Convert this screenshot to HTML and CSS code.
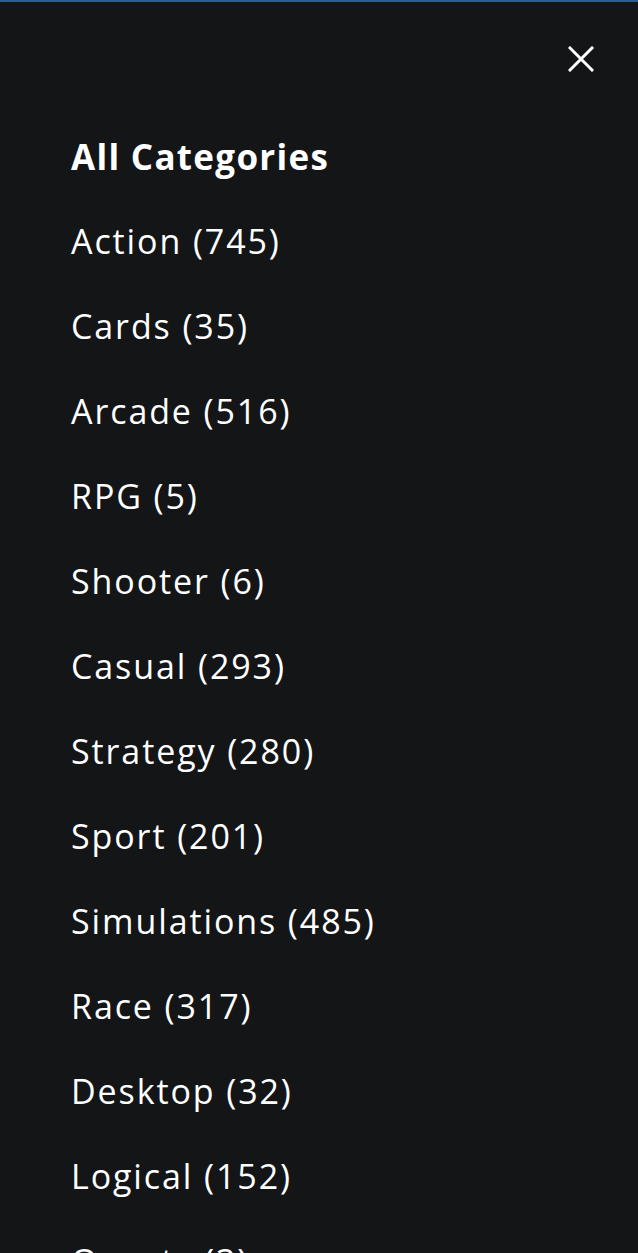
FILE: index.html
```html
<!DOCTYPE html>
<html lang="en">
<head>
  <meta charset="UTF-8">
  <title>All Categories</title>
  <link rel="stylesheet" href="styles.css">
</head>
<body>
  <div class="menu">
    <div class="menu-top">
      <button class="close" aria-label="Close">
        <svg width="26" height="26" viewBox="0 0 26 26">
          <path d="M2 2 L24 24 M24 2 L2 24" stroke="#fff" stroke-width="3" stroke-linecap="square"/>
        </svg>
      </button>
    </div>

    <h2 class="title">All Categories</h2>
    <ul class="categories">
      <li><a href="#">Action (745)</a></li>
      <li><a href="#">Cards (35)</a></li>
      <li><a href="#">Arcade (516)</a></li>
      <li><a href="#">RPG (5)</a></li>
      <li><a href="#">Shooter (6)</a></li>
      <li><a href="#">Casual (293)</a></li>
      <li><a href="#">Strategy (280)</a></li>
      <li><a href="#">Sport (201)</a></li>
      <li><a href="#">Simulations (485)</a></li>
      <li><a href="#">Race (317)</a></li>
      <li><a href="#">Desktop (32)</a></li>
      <li><a href="#">Logical (152)</a></li>
      <li><a href="#">Quests (3)</a></li>
    </ul>
  </div>
</body>
</html>
```

FILE: styles.css
```css
html, body {
  margin: 0;
  background: #141517;
}
body {
  font-family: "Open Sans", Arial, sans-serif;
  color: #fff;
  border-top: 2px solid #2b5d98;
  height: 1251px;
  overflow: hidden;
}
.menu-top {
  display: flex;
  justify-content: flex-end;
  padding: 42px 42px 0 0;
  height: 70px;
}
.close {
  background: none;
  border: none;
  padding: 0;
  width: 30px;
  height: 30px;
  display: flex;
  align-items: center;
  justify-content: center;
  cursor: pointer;
}
.title {
  margin: 0;
  padding-left: 71px;
  font-size: 35px;
  font-weight: 700;
  line-height: 85px;
  letter-spacing: 1.3px;
}
.categories {
  list-style: none;
  margin: 0;
  padding: 0 0 0 71px;
}
.categories li {
  line-height: 85px;
  font-size: 34px;
  letter-spacing: 1.9px;
}
.categories a {
  color: #fff;
  text-decoration: none;
}
```
